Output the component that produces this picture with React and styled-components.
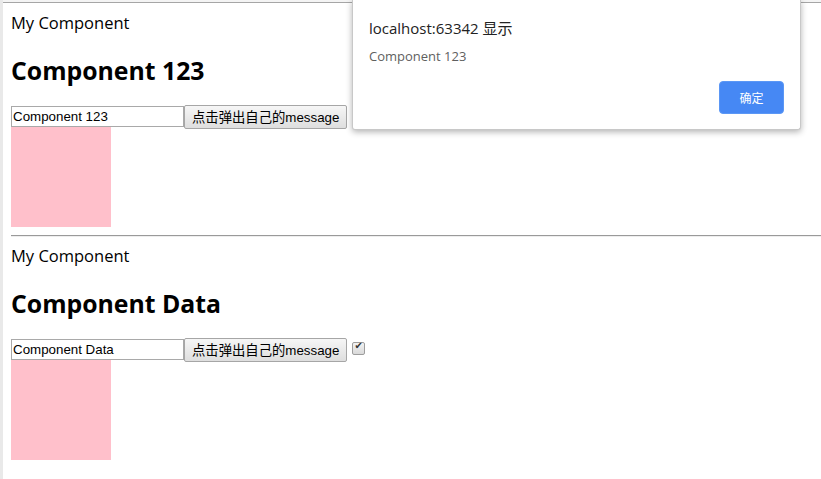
import React, { useState } from 'react';
import styled, { createGlobalStyle } from 'styled-components';

const GlobalStyle = createGlobalStyle`
  html, body {
    margin: 0;
    padding: 0;
    background: #fff;
  }
  body {
    font-family: "Open Sans", "Noto Sans CJK SC", sans-serif;
    color: #000;
  }
`;

const Frame = styled.div`
  position: relative;
  min-height: 479px;
  box-sizing: border-box;
  border-left: 3px solid #e9e9e9;
  padding-top: 2px;
  background: linear-gradient(#f4f4f4, #f4f4f4) top left / 100% 2px no-repeat;
`;

const Page = styled.div`
  border-top: 1px solid #a6a6a6;
  padding: 8px 0 8px 8px;
  overflow: hidden;
`;

const Label = styled.div`
  font-size: 16.5px;
  line-height: 23px;
`;

const Title = styled.h2`
  margin: 20px 0;
  font-size: 24.8px;
  line-height: 32px;
  font-weight: 700;
`;

const Row = styled.div`
  display: flex;
  align-items: center;
  height: 21px;
`;

const TextInput = styled.input`
  box-sizing: border-box;
  width: 173px;
  height: 21px;
  margin: 0;
  padding: 1px 1px;
  border: 1px solid #a9a9a9;
  font-family: "Liberation Sans", Arial, sans-serif;
  font-size: 13.33px;
  color: #000;
  outline: none;
`;

const PushButton = styled.button`
  box-sizing: border-box;
  height: 24px;
  margin: 0;
  padding: 0 7px;
  border: 1px solid #a6a6a6;
  border-radius: 2px;
  background: linear-gradient(#f6f6f6, #dedede);
  font-family: "Liberation Sans", "Noto Sans CJK SC", sans-serif;
  font-size: 13.33px;
  color: #000;
  white-space: nowrap;
`;

const Check = styled.input`
  appearance: none;
  position: relative;
  box-sizing: border-box;
  width: 13px;
  height: 13px;
  margin: 0 0 3px 5px;
  border: 1px solid #9d9d9d;
  border-radius: 2px;
  background: linear-gradient(#f2f2f2, #d9d9d9);

  &:checked::after {
    content: '✔';
    position: absolute;
    left: 1px;
    top: -3px;
    font-size: 10px;
    font-weight: 700;
    color: #333;
    font-family: "DejaVu Sans", sans-serif;
  }
`;

const Swatch = styled.div`
  width: 100px;
  height: 100px;
  background: pink;
`;

const Rule = styled.hr`
  margin: 8px 0 7px;
  border: none;
  border-top: 1px solid #9a9a9a;
  border-bottom: 1px solid #eeeeee;
  width: 1000px;
`;

const Dialog = styled.div`
  position: absolute;
  left: 349px;
  top: 0;
  box-sizing: border-box;
  width: 449px;
  height: 130px;
  padding: 17px 16px 16px;
  background: #fff;
  border: 1px solid #c8c8c8;
  border-top: none;
  border-radius: 0 0 3px 3px;
  box-shadow: 0 2px 6px rgba(0, 0, 0, 0.3);
`;

const DialogTitle = styled.div`
  font-size: 15px;
  line-height: 22px;
  color: #222;
`;

const DialogText = styled.div`
  margin-top: 8px;
  font-size: 13px;
  line-height: 18px;
  color: #5f5f5f;
`;

const DialogFooter = styled.div`
  display: flex;
  justify-content: flex-end;
  margin-top: 16px;
`;

const OkButton = styled.button`
  width: 65px;
  height: 33px;
  border: 1px solid #5b97f5;
  border-radius: 4px;
  background: #4688f4;
  color: #fff;
  font-family: "Noto Sans CJK SC", sans-serif;
  font-size: 12px;
`;

const MyComponent = ({ initial }) => {
  const [value, setValue] = useState(initial);
  return (
    <div>
      <Label>My Component</Label>
      <Title>{initial}</Title>
      <Row>
        <TextInput value={value} onChange={(e) => setValue(e.target.value)} />
        <PushButton>点击弹出自己的message</PushButton>
        <Check type="checkbox" defaultChecked />
      </Row>
      <Swatch />
    </div>
  );
};

const App = () => (
  <>
    <GlobalStyle />
    <Frame>
      <Page>
        <MyComponent initial="Component 123" />
        <Rule />
        <MyComponent initial="Component Data" />
      </Page>
      <Dialog>
        <DialogTitle>localhost:63342 显示</DialogTitle>
        <DialogText>Component 123</DialogText>
        <DialogFooter>
          <OkButton>确定</OkButton>
        </DialogFooter>
      </Dialog>
    </Frame>
  </>
);

export default App;
